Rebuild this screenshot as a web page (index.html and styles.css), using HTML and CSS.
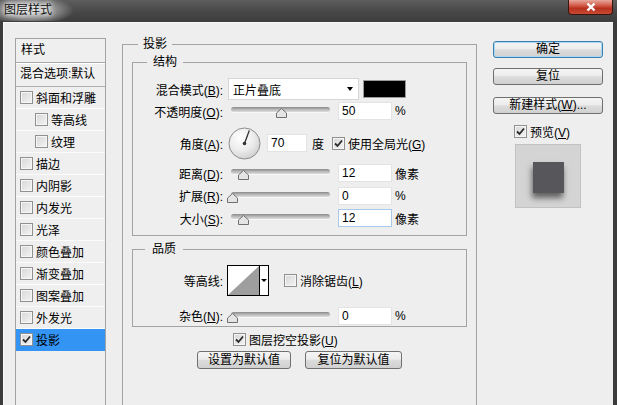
FILE: index.html
```html
<!DOCTYPE html>
<html lang="zh-CN">
<head>
<meta charset="utf-8">
<title>图层样式</title>
<link rel="stylesheet" href="styles.css">
</head>
<body>
<div class="window">
  <div class="titlebar">
    <span class="title">图层样式</span>
    <button class="close-btn" type="button"><svg width="12" height="10" viewBox="0 0 12 10"><path d="M2.5 1.5 L9.5 8.5 M9.5 1.5 L2.5 8.5" stroke="#fff" stroke-width="2.4"/></svg></button>
  </div>
  <div class="client">
    <div class="sidebar">
      <div class="side-head">样式</div>
      <div class="side-blend">混合选项:默认</div>
      <div class="side-item"><span class="cb"></span>斜面和浮雕</div>
      <div class="side-item sub"><span class="cb"></span>等高线</div>
      <div class="side-item sub"><span class="cb"></span>纹理</div>
      <div class="side-item"><span class="cb"></span>描边</div>
      <div class="side-item"><span class="cb"></span>内阴影</div>
      <div class="side-item"><span class="cb"></span>内发光</div>
      <div class="side-item"><span class="cb"></span>光泽</div>
      <div class="side-item"><span class="cb"></span>颜色叠加</div>
      <div class="side-item"><span class="cb"></span>渐变叠加</div>
      <div class="side-item"><span class="cb"></span>图案叠加</div>
      <div class="side-item"><span class="cb"></span>外发光</div>
      <div class="side-item selected"><span class="cb"><svg width="9" height="9" viewBox="0 0 9 9"><path d="M1 4.5 L3.5 7 L8 1.5" fill="none" stroke="#2a2a2a" stroke-width="1.8"/></svg></span>投影</div>
    </div>

    <fieldset class="group outer">
      <legend>投影</legend>
      <fieldset class="group structure">
        <legend>结构</legend>
        <div class="row r-mode">
          <span class="lbl">混合模式(<u>B</u>):</span>
          <div class="select"><span>正片叠底</span><span class="arrow"></span></div>
          <span class="swatch"></span>
        </div>
        <div class="row r-opacity">
          <span class="lbl">不透明度(<u>O</u>):</span>
          <div class="slider"><div class="track"></div><svg class="thumb" style="left:48px" width="11" height="10" viewBox="0 0 11 10"><polygon points="5.5,0.5 10.5,5 10.5,9.5 0.5,9.5 0.5,5" fill="#e4e4e4" stroke="#707070"/></svg></div>
          <span class="num">50</span><span class="unit">%</span>
        </div>
        <div class="row r-angle">
          <span class="lbl">角度(<u>A</u>):</span>
          <svg class="dial" width="33" height="33" viewBox="0 0 33 33">
            <defs><radialGradient id="dg" cx="38%" cy="32%" r="75%"><stop offset="0" stop-color="#ffffff"/><stop offset="0.55" stop-color="#ececec"/><stop offset="1" stop-color="#cdcdcd"/></radialGradient></defs>
            <circle cx="16.5" cy="16.5" r="15.5" fill="url(#dg)" stroke="#8c8c8c"/>
            <line x1="16.5" y1="16.5" x2="21.3" y2="3.5" stroke="#333" stroke-width="1.3"/>
            <circle cx="16.5" cy="16.5" r="1.8" fill="#333"/>
          </svg>
          <span class="num angle">70</span><span class="unit deg">度</span>
          <span class="cb global"><svg width="9" height="9" viewBox="0 0 9 9"><path d="M1 4.5 L3.5 7 L8 1.5" fill="none" stroke="#2a2a2a" stroke-width="1.8"/></svg></span><span>使用全局光(<u>G</u>)</span>
        </div>
        <div class="row r-distance">
          <span class="lbl">距离(<u>D</u>):</span>
          <div class="slider"><div class="track"></div><svg class="thumb" style="left:10px" width="11" height="10" viewBox="0 0 11 10"><polygon points="5.5,0.5 10.5,5 10.5,9.5 0.5,9.5 0.5,5" fill="#e4e4e4" stroke="#707070"/></svg></div>
          <span class="num">12</span><span class="unit">像素</span>
        </div>
        <div class="row r-spread">
          <span class="lbl">扩展(<u>R</u>):</span>
          <div class="slider"><div class="track"></div><svg class="thumb" style="left:-1px" width="11" height="10" viewBox="0 0 11 10"><polygon points="5.5,0.5 10.5,5 10.5,9.5 0.5,9.5 0.5,5" fill="#e4e4e4" stroke="#707070"/></svg></div>
          <span class="num">0</span><span class="unit">%</span>
        </div>
        <div class="row r-size">
          <span class="lbl">大小(<u>S</u>):</span>
          <div class="slider"><div class="track"></div><svg class="thumb" style="left:10px" width="11" height="10" viewBox="0 0 11 10"><polygon points="5.5,0.5 10.5,5 10.5,9.5 0.5,9.5 0.5,5" fill="#e4e4e4" stroke="#707070"/></svg></div>
          <span class="num focused">12</span><span class="unit">像素</span>
        </div>
      </fieldset>

      <fieldset class="group quality">
        <legend>品质</legend>
        <div class="row r-contour">
          <span class="lbl">等高线:</span>
          <div class="contour">
            <svg class="contour-preview" width="31" height="29" viewBox="0 0 31 29" preserveAspectRatio="none"><rect width="31" height="29" fill="#fff"/><polygon points="0,29 31,0 31,29" fill="#9e9e9e"/></svg>
            <span class="contour-drop"><span class="arrow small"></span></span>
          </div>
          <span class="cb antialias"></span><span>消除锯齿(<u>L</u>)</span>
        </div>
        <div class="row r-noise">
          <span class="lbl">杂色(<u>N</u>):</span>
          <div class="slider"><div class="track"></div><svg class="thumb" style="left:-1px" width="11" height="10" viewBox="0 0 11 10"><polygon points="5.5,0.5 10.5,5 10.5,9.5 0.5,9.5 0.5,5" fill="#e4e4e4" stroke="#707070"/></svg></div>
          <span class="num">0</span><span class="unit">%</span>
        </div>
      </fieldset>

      <div class="knockout">
        <span class="cb"><svg width="9" height="9" viewBox="0 0 9 9"><path d="M1 4.5 L3.5 7 L8 1.5" fill="none" stroke="#2a2a2a" stroke-width="1.8"/></svg></span><span>图层挖空投影(<u>U</u>)</span>
      </div>
      <div class="default-buttons">
        <button class="btn btn-setdef" type="button">设置为默认值</button>
        <button class="btn btn-resetdef" type="button">复位为默认值</button>
      </div>
    </fieldset>

    <div class="actions">
      <button class="btn default" type="button">确定</button>
      <button class="btn reset" type="button">复位</button>
      <button class="btn newstyle" type="button">新建样式(<u>W</u>)...</button>
      <div class="preview-check">
        <span class="cb"><svg width="9" height="9" viewBox="0 0 9 9"><path d="M1 4.5 L3.5 7 L8 1.5" fill="none" stroke="#2a2a2a" stroke-width="1.8"/></svg></span><span>预览(<u>V</u>)</span>
      </div>
      <div class="preview-box"><div class="preview-square"></div></div>
    </div>
  </div>
</div>
</body>
</html>
```
FILE: styles.css
```css
* { box-sizing: border-box; }
html, body { margin: 0; padding: 0; }
body {
  width: 617px;
  height: 405px;
  overflow: hidden;
  font-family: "Liberation Sans", "Noto Sans CJK SC", sans-serif;
  font-size: 12px;
  color: #000;
}
u { text-decoration: underline; text-underline-offset: 1px; }

.window {
  width: 617px;
  height: 405px;
  background: #3b3b3b;
  display: flex;
  flex-direction: column;
}

.titlebar {
  height: 22px;
  flex-shrink: 0;
  display: flex;
  justify-content: space-between;
  align-items: flex-start;
  background: linear-gradient(to bottom, #5e5e5e 0%, #474747 55%, #3d3d3d 100%);
}
.title {
  height: 21px;
  line-height: 20px;
  padding: 0 22px 0 4px;
  color: #111;
  text-shadow: 0 0 4px #fff, 0 0 6px #fff;
  background: radial-gradient(ellipse 60% 70% at 40% 50%, rgba(215,215,215,0.95) 0%, rgba(190,190,190,0.7) 50%, rgba(120,120,120,0) 100%);
}
.close-btn {
  width: 45px;
  height: 15px;
  margin-right: 4px;
  padding: 0;
  border: 1px solid #3a1510;
  border-top: none;
  border-radius: 0 0 4px 4px;
  background: linear-gradient(to bottom, #e6a89c 0%, #d25a48 40%, #b8301f 60%, #c94a34 100%);
  display: flex;
  align-items: center;
  justify-content: center;
}

.client {
  flex: 1;
  margin: 0 4px 0 3px;
  background: #eeeeee;
  box-shadow: inset 1px 1px 0 #fafafa;
  display: flex;
  align-items: flex-start;
  padding: 0 10px 0 12px;
  gap: 16px;
  overflow: hidden;
}

/* sidebar list */
.sidebar {
  width: 91px;
  height: 380px;
  flex-shrink: 0;
  margin-top: 16px;
  border: 1px solid #a3a3a3;
  background: #efefef;
}
.side-head {
  height: 24px;
  line-height: 22px;
  padding-left: 5px;
  border-bottom: 1px solid #a9a9a9;
  box-shadow: 0 1px 0 #fff;
}
.side-blend {
  height: 24px;
  line-height: 23px;
  padding-left: 4px;
  border-bottom: 1px solid #b0b0b0;
  white-space: nowrap;
}
.side-item {
  height: 22px;
  display: flex;
  align-items: center;
  padding-left: 4px;
  border-bottom: 1px solid #fbfbfb;
}
.side-item.sub { padding-left: 19px; }
.side-item.selected {
  background: #3394f4;
  border-bottom-color: #3394f4;
}

/* checkbox */
.cb {
  width: 13px;
  height: 13px;
  flex-shrink: 0;
  margin-right: 3px;
  border: 1px solid #909090;
  background: linear-gradient(135deg, #d6d6d6 0%, #f4f4f4 100%);
  box-shadow: inset 0 0 0 1px #f6f6f6;
  display: inline-flex;
  align-items: center;
  justify-content: center;
}

/* group boxes */
.group {
  margin: 0;
  border: 1px solid #a3a3a3;
  min-inline-size: 0;
}
.group legend {
  line-height: 14px;
  height: 14px;
  padding: 0;
}
.outer {
  width: 355px;
  height: 380px;
  flex-shrink: 0;
  margin-top: 15px;
  padding: 0 9px;
}
.outer > legend { margin-left: 6px; padding: 0 5px; }
.structure {
  margin-top: 4px;
  padding: 0 0 6px 0;
}
.structure > legend { margin-left: 14px; padding: 0 6px; }
.quality {
  margin-top: 6px;
  padding: 0;
}
.quality > legend { margin-left: 12px; padding: 0 7px; }

.row {
  display: flex;
  align-items: center;
  height: 22px;
  white-space: nowrap;
}
.lbl {
  width: 90px;
  text-align: right;
  flex-shrink: 0;
}
.r-mode { margin-top: 9px; }
.r-angle { margin-top: 5px; height: 32px; }
.r-distance { margin-top: 3px; }
.r-spread { height: 23px; }
.r-contour { margin-top: 9px; height: 30px; }
.r-noise { margin-top: 10px; height: 21px; }

.select {
  width: 131px;
  height: 22px;
  margin-left: 5px;
  background: #fff;
  border: 1px solid #d6d6d6;
  display: flex;
  align-items: center;
  justify-content: space-between;
  padding: 0 5px 0 4px;
}
.arrow {
  width: 0;
  height: 0;
  border-left: 3.5px solid transparent;
  border-right: 3.5px solid transparent;
  border-top: 4px solid #000;
}
.arrow.small {
  border-left-width: 3px;
  border-right-width: 3px;
  border-top-width: 3px;
}
.swatch {
  width: 43px;
  height: 18px;
  margin-left: 4px;
  background: #000;
  border: 1px solid #9a9a9a;
}

.slider {
  position: relative;
  width: 104px;
  height: 22px;
  margin-left: 5px;
  flex-shrink: 0;
}
.track {
  margin: 7px 2px 0 3px;
  height: 5px;
  border-radius: 3px;
  background: linear-gradient(to bottom, #8a8a8a 0%, #b8b8b8 50%, #dedede 100%);
  box-shadow: 0 1px 0 #f8f8f8;
}
.thumb {
  position: absolute;
  top: 8px;
}

.num {
  width: 54px;
  height: 18px;
  margin-left: 6px;
  background: #fff;
  border: 1px solid #e3e3e3;
  padding-left: 3px;
  line-height: 16px;
  flex-shrink: 0;
}
.num.focused { border-color: #a9c9ec; }
.num.angle { width: 40px; }
.unit { margin-left: 3px; }
.unit.deg { margin-left: 5px; }
.dial { margin-left: 5px; flex-shrink: 0; }
.cb.global { margin-left: 8px; }

.contour {
  display: flex;
  height: 31px;
  margin-left: 4px;
  border: 1px solid #000;
  background: #fff;
}
.contour-preview { display: block; width: 31px; height: 29px; }
.contour-drop {
  width: 9px;
  border-left: 1px solid #000;
  display: flex;
  align-items: center;
  justify-content: center;
}
.cb.antialias { margin-left: 15px; }

.knockout {
  display: flex;
  align-items: center;
  height: 14px;
  margin-top: 5px;
  padding-left: 101px;
  white-space: nowrap;
}
.default-buttons {
  display: flex;
  gap: 14px;
  margin-top: 5px;
  padding-left: 65px;
}

.btn {
  height: 18px;
  padding: 0;
  font: inherit;
  color: #000;
  line-height: 15px;
  border: 1px solid #707070;
  border-radius: 3px;
  background: linear-gradient(to bottom, #f5f5f5 0%, #ececec 45%, #dcdcdc 52%, #d0d0d0 100%);
  white-space: nowrap;
}
.btn-setdef { width: 94px; }
.btn-resetdef { width: 97px; }

.actions {
  width: 110px;
  flex-shrink: 0;
  margin-top: 19px;
  display: flex;
  flex-direction: column;
}
.actions .btn { width: 110px; height: 17px; }
.btn.default {
  border-color: #3c7fb1;
  box-shadow: inset 0 0 0 1px #a8d8f6;
}
.btn.reset { margin-top: 10px; }
.btn.newstyle { margin-top: 12px; }
.preview-check {
  display: flex;
  align-items: center;
  height: 14px;
  margin-top: 10px;
  margin-left: 21px;
  white-space: nowrap;
}
.preview-box {
  align-self: center;
  width: 66px;
  height: 64px;
  margin-top: 6px;
  background: #d4d4d4;
  border: 1px solid #c2c2c2;
  display: flex;
  align-items: center;
  justify-content: center;
}
.preview-square {
  width: 31px;
  height: 31px;
  margin-top: 3px;
  background: #57575b;
  box-shadow: -1px 5px 6px rgba(0,0,0,0.55);
}
```
